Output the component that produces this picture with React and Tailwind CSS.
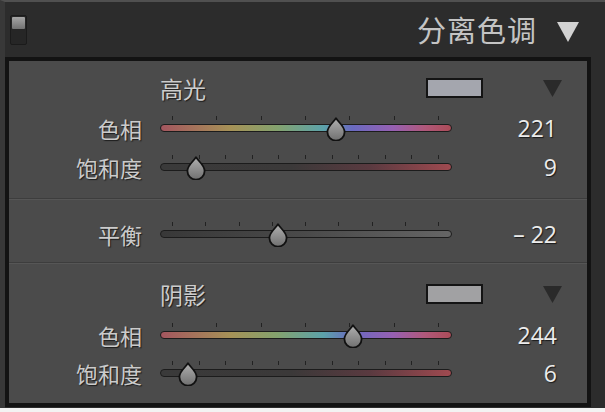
import React from 'react';

const CJK = "font-['Noto_Sans_CJK_SC','Noto_Sans',sans-serif]";
const NUM = "font-['Open_Sans','Noto_Sans',sans-serif]";

// track fills
const HUE_TRACK =
  'bg-[linear-gradient(to_right,#a4565f,#a69257_24%,#84a26e_40%,#5ca2aa_56%,#6a6ac0_66%,#9660b2_80%,#b0587a_91%,#ac4c58)]';
const SAT_TRACK =
  'bg-[linear-gradient(to_right,#3a3a3a,#3b3939_45%,#5a3a40_72%,#a04a50)]';
const BAL_TRACK = 'bg-[linear-gradient(to_right,#383838,#4a4a4a_50%,#656565)]';

const Thumb = ({ left }) => (
  <svg
    width="22"
    height="24"
    viewBox="0 0 22 24"
    className="absolute top-[8px]"
    style={{ left: left - 11 }}
  >
    <defs>
      <linearGradient id="thumbFill" x1="0" y1="0" x2="0" y2="1">
        <stop offset="0" stopColor="#b0b0b0" />
        <stop offset="1" stopColor="#707070" />
      </linearGradient>
    </defs>
    <path
      d="M11 1.2 C13 5 19.6 9 19.6 15 A8.6 8.6 0 0 1 2.4 15 C2.4 9 9 5 11 1.2 Z"
      fill="url(#thumbFill)"
      stroke="#111"
      strokeWidth="1.8"
      strokeLinejoin="round"
    />
  </svg>
);

const Slider = ({ track, ticks, pos }) => {
  const marks = Array.from({ length: ticks }, (_, i) => 12 + (266 * i) / (ticks - 1));
  return (
    <div className="relative w-[292px] h-full flex items-center">
      <div className={`w-full h-[8px] rounded-full border border-[#1c1c1c] ${track}`} />
      {marks.map((x, i) => (
        <span
          key={i}
          className="absolute top-[7px] w-px h-[4px] bg-[#222222]"
          style={{ left: x }}
        />
      ))}
      <Thumb left={pos} />
    </div>
  );
};

const Row = ({ label, value, track, ticks, pos, className = '' }) => (
  <div className={`flex items-center h-[38px] ${className}`}>
    <div
      className={`w-[133px] text-right text-[22px] leading-none text-[#cbcbcb] [text-shadow:1px_1px_1px_#1c1c1c] ${CJK}`}
    >
      {label}
    </div>
    <div className="ml-[18px] h-full">
      <Slider track={track} ticks={ticks} pos={pos} />
    </div>
    <div
      className={`w-[105px] text-right text-[23px] leading-none text-[#ececec] [text-shadow:1px_1px_1px_#1a1a1a] ${NUM}`}
    >
      {value}
    </div>
  </div>
);

const SectionHead = ({ title, swatch }) => (
  <div className="flex items-center h-[30px] pl-[151px] pr-[25px]">
    <span
      className={`text-[23px] leading-none text-[#cdcdcd] [text-shadow:1px_1px_1px_#1c1c1c] ${CJK}`}
    >
      {title}
    </span>
    <div className="flex-1" />
    <div className={`w-[57px] h-[20px] border-2 border-[#141414] ${swatch}`} />
    <svg width="19" height="17" viewBox="0 0 19 17" className="ml-[60px]">
      <polygon points="0,0 19,0 9.5,17" fill="#2a2a2a" />
    </svg>
  </div>
);

const Divider = () => (
  <div className="border-t border-[#3d3d3d]">
    <div className="border-t border-[#565656]" />
  </div>
);

const App = () => {
  return (
    <div className="w-[605px] h-[412px] bg-[#f3f3f3] overflow-hidden">
      <div className="h-[408px] bg-[#2c2c2c] border-t-2 border-[#505050] border-l-[5px] border-l-[#383838]">
        {/* header */}
        <div className="h-[55px] flex items-center pr-[26px]">
          <div className="ml-[5px] w-[17px] h-[30px] rounded-[2px] border border-[#1b1b1b] bg-[#262626] flex flex-col">
            <div className="h-[12px] m-[1px] rounded-[1px] bg-[linear-gradient(to_bottom,#a6a6a6,#727272)]" />
          </div>
          <div className="flex-1" />
          <span
            className={`text-[29px] leading-none tracking-[1px] text-[#c4c4c4] ${CJK}`}
          >
            分离色调
          </span>
          <svg width="22" height="20" viewBox="0 0 22 20" className="ml-[20px] mt-[4px]">
            <polygon points="0,0 22,0 11,20" fill="#d2d2d2" />
          </svg>
        </div>

        {/* panel */}
        <div className="w-[586px] h-[350px] border-4 border-[#131313] bg-[#4b4b4b] flex flex-col">
          <div className="h-[137px] pt-[12px]">
            <SectionHead title="高光" swatch="bg-[#a4a6ae]" />
            <Row label="色相" value="221" track={HUE_TRACK} ticks={7} pos={176} className="mt-[6px]" />
            <Row label="饱和度" value="9" track={SAT_TRACK} ticks={11} pos={36} className="mt-[1px]" />
          </div>
          <Divider />
          <div className="h-[62px] pt-[15px]">
            <Row label="平衡" value="– 22" track={BAL_TRACK} ticks={9} pos={118} />
          </div>
          <Divider />
          <div className="flex-1 pt-[15px]">
            <SectionHead title="阴影" swatch="bg-[#a1a1a3]" />
            <Row label="色相" value="244" track={HUE_TRACK} ticks={7} pos={193} className="mt-[7px]" />
            <Row label="饱和度" value="6" track={SAT_TRACK} ticks={11} pos={28} />
          </div>
        </div>
      </div>
    </div>
  );
};

export default App;
